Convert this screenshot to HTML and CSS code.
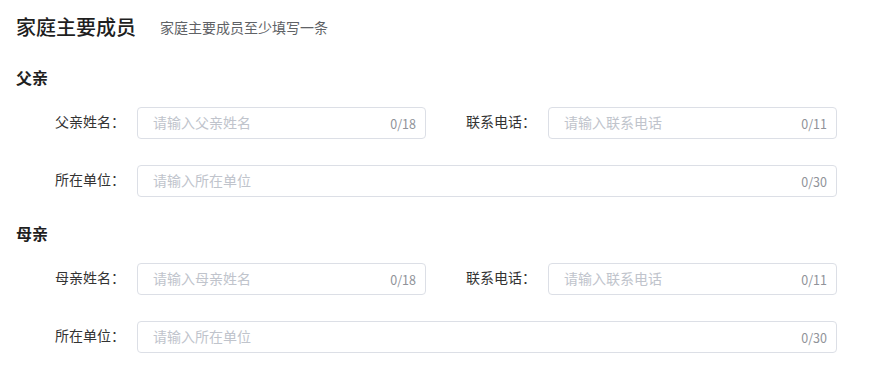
FILE: index.html
```html
<!DOCTYPE html>
<html lang="zh-CN">
<head>
<meta charset="utf-8">
<link rel="stylesheet" href="styles.css">
</head>
<body>
<div class="page">
  <div class="header">
    <h1 class="title">家庭主要成员</h1>
    <span class="subtitle">家庭主要成员至少填写一条</span>
  </div>

  <section class="section">
    <h2 class="section-title">父亲</h2>
    <div class="form-grid">
      <div class="field">
        <label class="label">父亲姓名：</label>
        <div class="input"><span class="placeholder">请输入父亲姓名</span><span class="count">0/18</span></div>
      </div>
      <div class="field">
        <label class="label">联系电话：</label>
        <div class="input"><span class="placeholder">请输入联系电话</span><span class="count">0/11</span></div>
      </div>
      <div class="field wide">
        <label class="label">所在单位：</label>
        <div class="input"><span class="placeholder">请输入所在单位</span><span class="count">0/30</span></div>
      </div>
    </div>
  </section>

  <section class="section">
    <h2 class="section-title">母亲</h2>
    <div class="form-grid">
      <div class="field">
        <label class="label">母亲姓名：</label>
        <div class="input"><span class="placeholder">请输入母亲姓名</span><span class="count">0/18</span></div>
      </div>
      <div class="field">
        <label class="label">联系电话：</label>
        <div class="input"><span class="placeholder">请输入联系电话</span><span class="count">0/11</span></div>
      </div>
      <div class="field wide">
        <label class="label">所在单位：</label>
        <div class="input"><span class="placeholder">请输入所在单位</span><span class="count">0/30</span></div>
      </div>
    </div>
  </section>
</div>
</body>
</html>
```

FILE: styles.css
```css
* { box-sizing: border-box; }
html, body { margin: 0; padding: 0; background: #fff; }
body {
  font-family: "Noto Sans CJK SC", "Noto Sans", sans-serif;
  color: #303133;
}
.page {
  padding: 13px 16px 0 16px;
  width: 880px;
}
.header {
  display: flex;
  align-items: center;
  height: 28px;
}
.title {
  margin: 0;
  font-size: 20px;
  font-weight: 500;
  line-height: 28px;
  color: #1f1f1f;
}
.subtitle {
  margin-left: 24px;
  font-size: 14px;
  color: #606266;
  line-height: 28px;
}
.section { margin-top: 24px; }
.section + .section { margin-top: 24px; }
.section-title {
  margin: 0;
  font-size: 16px;
  font-weight: 700;
  line-height: 24px;
  color: #1f1f1f;
}
.form-grid {
  margin-top: 18px;
  margin-left: 21px;
  width: 800px;
  display: grid;
  grid-template-columns: 389px 389px;
  column-gap: 22px;
  row-gap: 26px;
}
.field {
  display: flex;
  align-items: center;
}
.field.wide { grid-column: 1 / 3; }
.label {
  width: 100px;
  flex: none;
  text-align: right;
  padding-right: 12px;
  padding-bottom: 3px;
  font-size: 14px;
  color: #333;
  line-height: 29px;
}
.input {
  flex: 1;
  height: 32px;
  border: 1px solid #dcdfe6;
  border-radius: 4px;
  display: flex;
  align-items: center;
  justify-content: space-between;
  padding: 0 9px 2px 15px;
}
.placeholder {
  font-size: 14px;
  color: #c0c4cc;
}
.count {
  font-size: 12.5px;
  color: #909399;
  padding-top: 3px;
}
```
